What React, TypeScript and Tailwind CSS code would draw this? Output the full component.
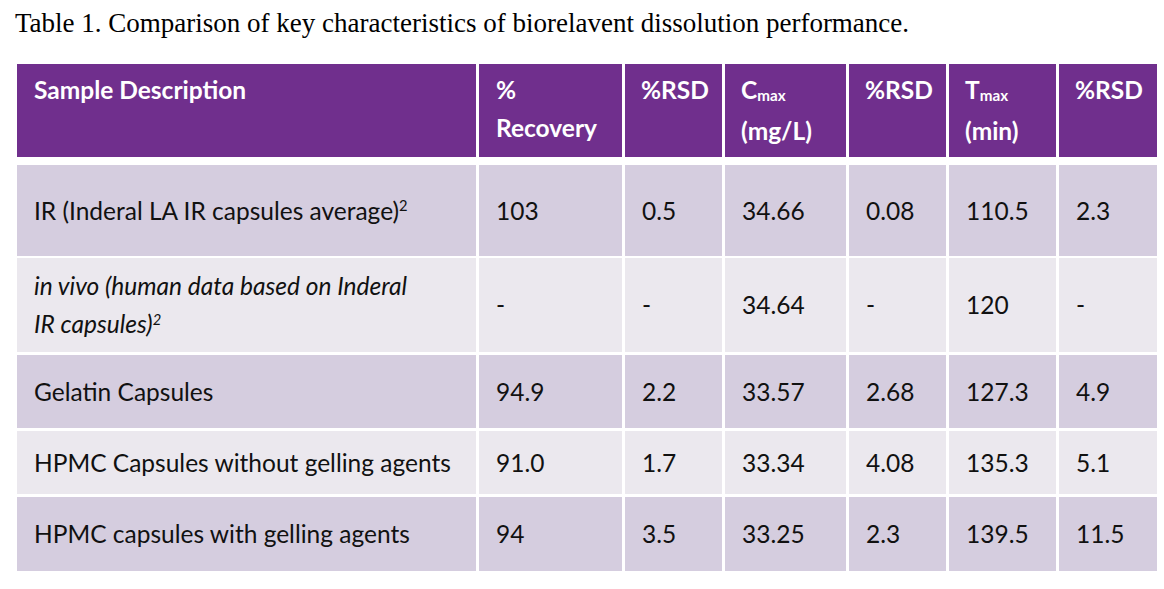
import React from 'react';

type Row = {
  desc: React.ReactNode;
  cells: string[];
  bg: string;
  h: string;
  mb: string;
};

const Sup = () => <sup className="text-[0.6em] relative -top-[0.55em]">2</sup>;

const rows: Row[] = [
  {
    desc: (
      <>
        IR (Inderal LA IR capsules average)
        <Sup />
      </>
    ),
    cells: ['103', '0.5', '34.66', '0.08', '110.5', '2.3'],
    bg: 'bg-[#d5cddf]',
    h: 'h-[91px]',
    mb: 'mb-[2px]',
  },
  {
    desc: (
      <span className="italic">
        in vivo (human data based on Inderal
        <br />
        IR capsules)
        <Sup />
      </span>
    ),
    cells: ['-', '-', '34.64', '-', '120', '-'],
    bg: 'bg-[#ebe8ee]',
    h: 'h-[94px]',
    mb: 'mb-[3px]',
  },
  {
    desc: 'Gelatin Capsules',
    cells: ['94.9', '2.2', '33.57', '2.68', '127.3', '4.9'],
    bg: 'bg-[#d5cddf]',
    h: 'h-[73px]',
    mb: 'mb-[3px]',
  },
  {
    desc: 'HPMC Capsules without gelling agents',
    cells: ['91.0', '1.7', '33.34', '4.08', '135.3', '5.1'],
    bg: 'bg-[#ebe8ee]',
    h: 'h-[63px]',
    mb: 'mb-[3px]',
  },
  {
    desc: 'HPMC capsules with gelling agents',
    cells: ['94', '3.5', '33.25', '2.3', '139.5', '11.5'],
    bg: 'bg-[#d5cddf]',
    h: 'h-[74px]',
    mb: 'mb-0',
  },
];

const gridCols = 'grid grid-cols-[459px_143px_97px_121px_97px_107px_98px] gap-x-[3px]';

function Sub({ children }: { children: React.ReactNode }) {
  return <span className="text-[0.62em] relative top-[0.1em]">{children}</span>;
}

export default function App() {
  return (
    <div className="w-[1164px] h-[589px] bg-white overflow-hidden">
      <p className="pl-[15px] pt-[7px] text-[27px] leading-[32px] text-black font-['Liberation_Serif',serif]">
        Table 1. Comparison of key characteristics of biorelavent dissolution performance.
      </p>

      <div className="ml-[17px] mt-[25px] w-[1138px] font-['Lato',sans-serif] text-[24.5px] leading-[38px]">
        <div className={`${gridCols} h-[93px] mb-[8px] font-bold text-white`}>
          <div className="bg-[#702f8d] px-[17px] pt-[7px]">Sample Description</div>
          <div className="bg-[#702f8d] px-[17px] pt-[7px]">
            %<br />Recovery
          </div>
          <div className="bg-[#702f8d] px-[16px] pt-[7px]">%RSD</div>
          <div className="bg-[#702f8d] px-[16px] pt-[7px]">
            C<Sub>max</Sub>
            <br />
            (mg/L)
          </div>
          <div className="bg-[#702f8d] px-[16px] pt-[7px]">%RSD</div>
          <div className="bg-[#702f8d] px-[16px] pt-[7px]">
            T<Sub>max</Sub>
            <br />
            (min)
          </div>
          <div className="bg-[#702f8d] px-[16px] pt-[7px]">%RSD</div>
        </div>

        {rows.map((row, i) => (
          <div key={i} className={`${gridCols} ${row.h} ${row.mb} text-[#111111]`}>
            <div className={`${row.bg} px-[17px] flex items-center`}>
              <div>{row.desc}</div>
            </div>
            {row.cells.map((c, j) => (
              <div key={j} className={`${row.bg} px-[17px] flex items-center`}>
                {c}
              </div>
            ))}
          </div>
        ))}
      </div>
    </div>
  );
}
